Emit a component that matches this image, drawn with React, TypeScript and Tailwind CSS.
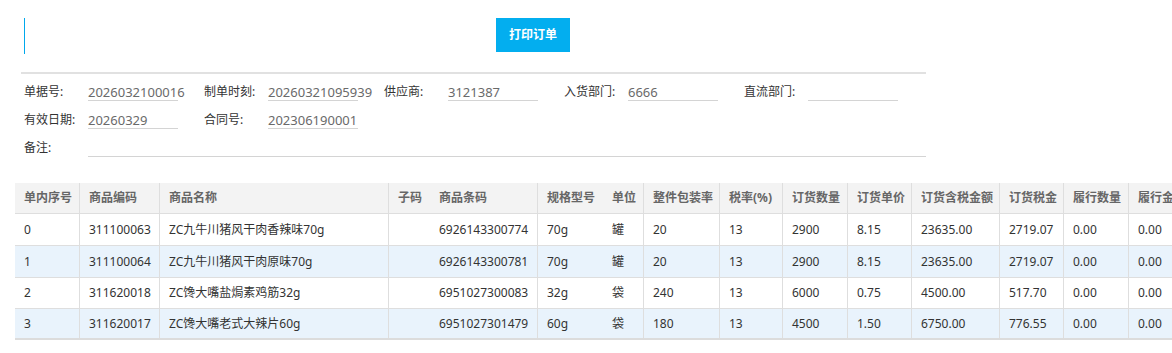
const FONT = "font-['Noto_Sans','Noto_Sans_CJK_SC',sans-serif]";

type Col = { title: string; cls: string; line: boolean };

const COLS: Col[] = [
  { title: "单内序号", cls: "w-[64px]", line: false },
  { title: "商品编码", cls: "w-[80px]", line: true },
  { title: "商品名称", cls: "w-[229px]", line: true },
  { title: "子码", cls: "w-[41px]", line: true },
  { title: "商品条码", cls: "w-[108px]", line: false },
  { title: "规格型号", cls: "w-[65px]", line: true },
  { title: "单位", cls: "w-[41px]", line: false },
  { title: "整件包装率", cls: "w-[76px]", line: true },
  { title: "税率(%)", cls: "w-[63px]", line: true },
  { title: "订货数量", cls: "w-[65px]", line: true },
  { title: "订货单价", cls: "w-[64px]", line: true },
  { title: "订货含税金额", cls: "w-[88px]", line: true },
  { title: "订货税金", cls: "w-[64px]", line: true },
  { title: "履行数量", cls: "w-[65px]", line: true },
  { title: "履行金额", cls: "w-[80px]", line: true },
];

const ROWS = [
  ["0", "311100063", "ZC九牛川猪风干肉香辣味70g", "", "6926143300774", "70g", "罐", "20", "13", "2900", "8.15", "23635.00", "2719.07", "0.00", "0.00"],
  ["1", "311100064", "ZC九牛川猪风干肉原味70g", "", "6926143300781", "70g", "罐", "20", "13", "2900", "8.15", "23635.00", "2719.07", "0.00", "0.00"],
  ["2", "311620018", "ZC馋大嘴盐焗素鸡筋32g", "", "6951027300083", "32g", "袋", "240", "13", "6000", "0.75", "4500.00", "517.70", "0.00", "0.00"],
  ["3", "311620017", "ZC馋大嘴老式大辣片60g", "", "6951027301479", "60g", "袋", "180", "13", "4500", "1.50", "6750.00", "776.55", "0.00", "0.00"],
];

// row heights include the 1px top border
const ROW_H = ["h-[32px]", "h-[32px]", "h-[31px]", "h-[30px]"];

function Field({ label, value, wide }: { label: string; value?: string; wide?: boolean }) {
  return (
    <div className="flex w-[180px] shrink-0 items-end">
      <div className="mb-px w-[64px] shrink-0 text-[12px] leading-[16px] text-[#333]">{label}</div>
      <div
        className={`${wide ? "w-[838px]" : "w-[90px]"} h-[17px] shrink-0 border-b border-[#d4d4d4] text-[13px] leading-[16px] whitespace-nowrap text-[#6a6a6a]`}
      >
        {value}
      </div>
    </div>
  );
}

function Cell({ col, first, children }: { col: Col; first: boolean; children: React.ReactNode }) {
  return (
    <div
      className={`${col.cls} flex shrink-0 items-center whitespace-nowrap ${
        col.line ? "border-l border-[#dedede] pl-[9px]" : first ? "pl-[9px]" : "pl-[10px]"
      }`}
    >
      {children}
    </div>
  );
}

export default function App() {
  return (
    <div className={`${FONT} h-[353px] w-full overflow-hidden bg-white`}>
      <div className="flex h-[72px] items-start">
        <div className="mt-[18px] ml-[24px] h-[36px] w-px bg-[#00a8ec]" />
        <button className="mt-[18px] ml-[471px] h-[34px] w-[74px] bg-[#03aeef] text-[12px] font-bold text-white">
          打印订单
        </button>
      </div>
      <div className="ml-[21px] h-[2px] w-[905px] bg-[#e1e1e1]" />

      <div className="pl-[24px]">
        <div className="flex h-[27px] items-end">
          <Field label="单据号:" value="2026032100016" />
          <Field label="制单时刻:" value="20260321095939" />
          <Field label="供应商:" value="3121387" />
          <Field label="入货部门:" value="6666" />
          <Field label="直流部门:" />
        </div>
        <div className="flex h-[28px] items-end">
          <Field label="有效日期:" value="20260329" />
          <Field label="合同号:" value="202306190001" />
        </div>
        <div className="flex h-[28px] items-end">
          <Field label="备注:" wide />
        </div>
      </div>

      <div className="mt-[26px] ml-[15px] overflow-hidden text-[12px]">
        <div className="flex h-[30px] bg-[#f3f3f3] font-bold text-[#666]">
          {COLS.map((c, i) => (
            <Cell key={c.title} col={c} first={i === 0}>
              {c.title}
            </Cell>
          ))}
        </div>
        {ROWS.map((r, ri) => (
          <div
            key={ri}
            className={`flex ${ROW_H[ri]} border-t border-[#dedede] text-[#333] ${
              ri % 2 === 1 ? "bg-[#e9f3fc]" : "bg-white"
            }`}
          >
            {COLS.map((c, i) => (
              <Cell key={c.title} col={c} first={i === 0}>
                {r[i]}
              </Cell>
            ))}
          </div>
        ))}
        <div className="h-[2px] bg-[#dcdcdc]" />
      </div>
    </div>
  );
}
